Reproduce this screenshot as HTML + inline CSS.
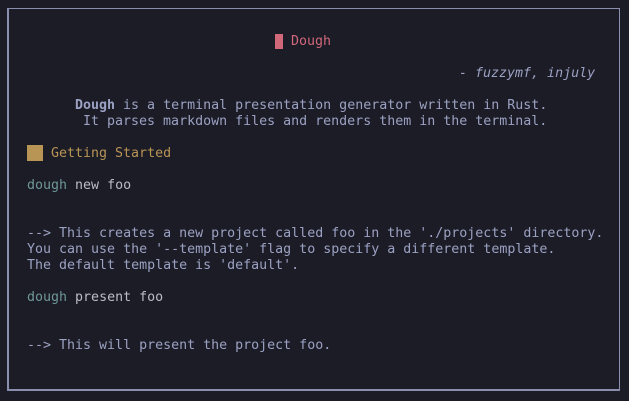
<!DOCTYPE html>
<html><head><style>
html,body{margin:0;padding:0;background:#1c1c27;width:629px;height:401px;overflow:hidden}
.b{position:absolute;left:7px;top:8px;width:613px;height:383px;border:1px solid #8a8fb0;box-sizing:border-box;border-width:1px 1px 2px 2px}
.l{position:absolute;font-family:"DejaVu Sans Mono","Liberation Mono",monospace;font-size:13.3px;line-height:16px;white-space:pre;color:#9ba1c2}
.t{color:#6f9896}.c{color:#bcbcc8}
</style></head><body>
<div class="b"></div>
<div style="position:absolute;left:275px;top:34px;width:8px;height:15px;background:#d0687a"></div>
<div class="l" style="left:291px;top:34px;color:#d0687a">Dough</div>
<div class="l" style="left:459px;top:66px;font-style:italic">- fuzzymf, injuly</div>
<div class="l" style="left:75px;top:98px"><b>Dough</b> is a terminal presentation generator written in Rust.</div>
<div class="l" style="left:83px;top:114px">It parses markdown files and renders them in the terminal.</div>
<div style="position:absolute;left:27px;top:145px;width:16px;height:16px;background:#b89455"></div>
<div class="l" style="left:51px;top:146px;color:#b89455">Getting Started</div>
<div class="l" style="left:27px;top:178px"><span class="t">dough</span> <span class="c">new foo</span></div>
<div class="l" style="left:27px;top:226px">--> This creates a new project called foo in the './projects' directory.
You can use the '--template' flag to specify a different template.
The default template is 'default'.</div>
<div class="l" style="left:27px;top:290px"><span class="t">dough</span> <span class="c">present foo</span></div>
<div class="l" style="left:27px;top:338px">--> This will present the project foo.</div>
</body></html>
